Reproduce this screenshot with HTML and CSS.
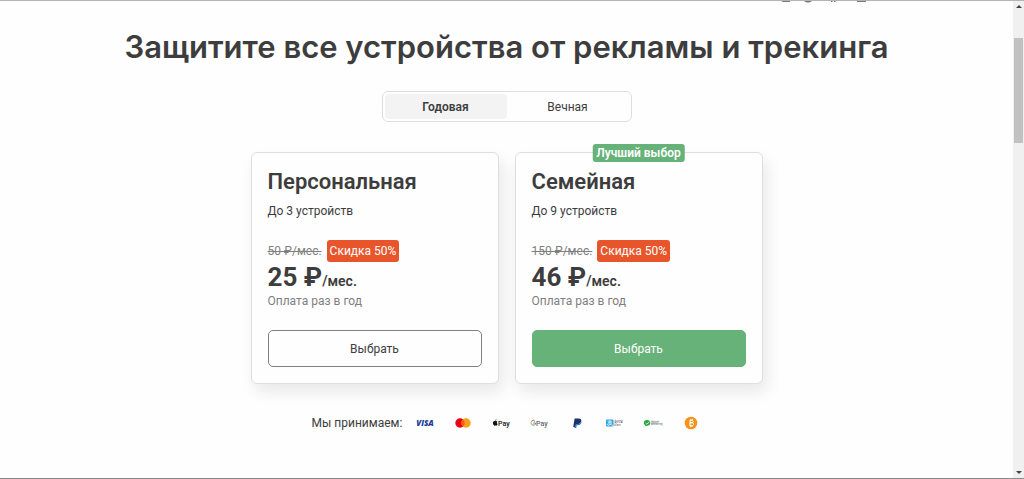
FILE: index.html
```html
<!DOCTYPE html>
<html lang="ru">
<head>
<meta charset="utf-8">
<meta name="viewport" content="width=device-width, initial-scale=1">
<title>Защитите все устройства</title>
<link rel="stylesheet" href="styles.css">
</head>
<body>
<div class="window">
  <main class="page">
    <svg class="nav-edge" width="90" height="3" viewBox="0 0 90 3" aria-hidden="true">
      <path d="M4 0h9v1H6zM27 0h8q-4 3-8 0zM54 0h2l-1 1h-1zM57 0h2l-1 1h-1zM80 0h9v1h-9z" fill="#777"/>
    </svg>
    <h1 class="title">Защитите все устройства от рекламы и трекинга</h1>
    <div class="tabs" role="tablist">
      <button class="tab tab-active" role="tab" aria-selected="true">Годовая</button>
      <button class="tab" role="tab" aria-selected="false">Вечная</button>
    </div>
    <div class="plans">
      <section class="card">
        <h2 class="plan-name">Персональная</h2>
        <p class="devices">До 3 устройств</p>
        <div class="old-row"><s class="old-price">50 ₽/мес.</s><span class="discount">Скидка 50%</span></div>
        <p class="price">25 ₽<span class="period">/мес.</span></p>
        <p class="billing">Оплата раз в год</p>
        <button class="choose">Выбрать</button>
      </section>
      <section class="card">
        <span class="best">Лучший выбор</span>
        <h2 class="plan-name">Семейная</h2>
        <p class="devices">До 9 устройств</p>
        <div class="old-row"><s class="old-price">150 ₽/мес.</s><span class="discount">Скидка 50%</span></div>
        <p class="price">46 ₽<span class="period">/мес.</span></p>
        <p class="billing">Оплата раз в год</p>
        <button class="choose choose-primary">Выбрать</button>
      </section>
    </div>
    <div class="payments">
      <span class="accept">Мы принимаем:</span>
      <div class="methods">
        <svg class="method" viewBox="0 0 20 14" role="img" aria-label="Visa"><text class="visa" x="10" y="10" text-anchor="middle">VISA</text></svg>
        <svg class="method" viewBox="0 0 20 14" role="img" aria-label="Mastercard"><circle cx="7" cy="7" r="4.7" fill="#eb001b"/><circle cx="13" cy="7" r="4.7" fill="#f79e1b"/><path d="M10 3.4a4.7 4.7 0 0 1 0 7.2a4.7 4.7 0 0 1 0-7.2z" fill="#ff5f00"/></svg>
        <svg class="method" viewBox="0 0 20 14" role="img" aria-label="Apple Pay"><path d="M4.500 5.200c.7-.5 1.500-.3 2 .3c-1 .7-.8 2 .2 2.500C6.300 9 5.700 9.700 5.200 9.700c-.5 0-.8-.2-1.200 0C3 10 1.900 8.400 1.900 7.100c0-1.700 1.400-2.500 2.600-1.900zM4.300 4.800c0-.8.500-1.400 1.200-1.500c.1.800-.5 1.500-1.200 1.500z" fill="#111"/><text class="pay apple" x="7" y="9.500">Pay</text></svg>
        <svg class="method" viewBox="0 0 20 14" role="img" aria-label="Google Pay"><path d="M6 5.300A2.300 2.300 0 0 0 2.500 5.300" fill="none" stroke="#d4544a"/><path d="M2.500 5.300a2.500 2.500 0 0 0 0 3" fill="none" stroke="#c7a640"/><path d="M2.500 8.300a2.400 2.400 0 0 0 3 .6" fill="none" stroke="#55a169"/><path d="M4.300 7h2.200c0 1-.3 1.600-1 2" fill="none" stroke="#5583c7"/><text class="pay google" x="7" y="9.500">Pay</text></svg>
        <svg class="method" viewBox="0 0 20 14" role="img" aria-label="PayPal"><path d="M7.600 2.500h4.200c2.300 0 3 1.400 2.300 3.200c-.6 1.700-1.900 2.300-4 2.300H9l-.5 2.900H6.200z" fill="#1c3270"/><path d="M14.400 5c.5 2.600-1 4.200-3.600 4.200H9.700L9.200 12H7.400l.4-1.400h.9l.5-2.500h1.100c2.100 0 3.700-.9 4.100-3.100z" fill="#2380b8"/></svg>
        <svg class="method" viewBox="0 0 20 14" role="img" aria-label="Alipay"><rect x="1" y="3.500" width="7.500" height="7" rx="1" fill="#2aa3e3"/><path d="M2.500 5.200h4.500M4.800 4.300v2.400M3 6.700h3.600C6 8.700 2.300 10.300 2.300 8.500c0-1.300 2.500-.5 5.700 1" fill="none" stroke="#fff" stroke-width=".7"/><text class="tiny" x="9" y="7">支付宝</text><text class="tiny latin" x="9" y="10">ALIPAY</text></svg>
        <svg class="method" viewBox="0 0 20 14" role="img" aria-label="WeChat Pay"><path d="M4 4.100c2 0 3.300 1.200 3.300 2.800S6 9.700 4 9.700l-1.900.5l.3-1C1.400 8.700.8 7.900.8 6.900c0-1.600 1.300-2.800 3.200-2.800z" fill="#25a63b"/><path d="M2.500 7l1.200 1l2.700-2" fill="none" stroke="#fff" stroke-width=".8"/><text class="tiny wechat" x="8" y="7">微信支付</text><text class="tiny wechat" x="8" y="9">WeChat Pay</text></svg>
        <svg class="method" viewBox="0 0 20 14" role="img" aria-label="Bitcoin"><circle cx="10" cy="7" r="6.300" fill="#f7931a"/><path d="M8.800 4.400h2c2 0 1.800 2.400 0 2.400H8.800h2.200c2.200 0 2 2.800 0 2.800H8.600M9 4.400v5.200M9.800 3v1.400M11.300 3v1.400M9.400 9.600V11M10.900 9.600V11" fill="none" stroke="#fff"/></svg>
      </div>
    </div>
  </main>
  <div class="scrollbar" aria-hidden="true">
    <span class="arrow arrow-up"></span>
    <span class="thumb"></span>
    <span class="arrow arrow-down"></span>
  </div>
</div>
</body>
</html>
```
FILE: styles.css
```css
* { box-sizing: border-box; }
body {
  margin: 0;
  background: #fefefe;
  color: #3d3d3d;
  font-family: Roboto, "Noto Sans CJK SC", sans-serif;
  font-size: 12px;
  line-height: 16px;
}
h1, h2, p { margin: 0; }
button { font: inherit; color: inherit; cursor: pointer; }
.window {
  display: flex;
  min-height: 100vh;
  border-top: 1px solid #b4b4b4;
  border-bottom: 1px solid #8a8a8a;
}
.page {
  position: relative;
  flex: 1;
  display: flex;
  flex-direction: column;
  align-items: center;
  padding-top: 26px;
}
.nav-edge { position: absolute; top: 0; right: 146px; }
.title { font-family: Inter, sans-serif; font-size: 31px; line-height: 40px; font-weight: 600; text-align: center; }
.tabs {
  display: flex;
  width: 250px;
  margin-top: 24px;
  padding: 2px;
  border: 1px solid #dedede;
  border-radius: 6px;
}
.tab { flex: 1; height: 25px; padding: 0; border: 0; border-radius: 4px; background: none; }
.tab-active { background: #f3f3f3; font-weight: 600; }
.plans { display: flex; gap: 16px; margin-top: 30px; }
.card {
  position: relative;
  width: 248px;
  padding: 16px;
  border: 1px solid #dedede;
  border-radius: 6px;
  background: #fefefe;
  box-shadow: 4px 8px 16px rgba(0, 0, 0, 0.09);
}
.best {
  position: absolute;
  top: -9px;
  left: 50%;
  transform: translateX(-50%);
  padding: 1px 4px;
  border-radius: 3px;
  background: #67b279;
  color: #fff;
  font-weight: 600;
  white-space: nowrap;
}
.plan-name { font-family: Roboto, sans-serif; font-size: 22px; line-height: 26px; font-weight: 600; }
.devices { margin-top: 8px; }
.old-row { display: flex; align-items: center; gap: 5px; margin-top: 21px; }
.old-price { color: #7f7f7f; }
.discount { padding: 3px; border-radius: 3px; background: #e9552a; color: #fff; }
.price { font-size: 26px; line-height: 31px; font-weight: 700; }
.period { font-size: 14px; line-height: 16px; font-weight: 600; }
.billing { color: #7f7f7f; }
.choose {
  display: block;
  width: 100%;
  height: 37px;
  margin-top: 21px;
  padding: 0;
  border: 1px solid #7f7f7f;
  border-radius: 5px;
  background: none;
}
.choose-primary { border-color: #67b279; background: #67b279; color: #fff; }
.payments { display: flex; align-items: center; gap: 13px; margin-top: 31px; }
.methods { display: flex; gap: 18px; }
.method { width: 20px; height: 14px; overflow: visible; }
.visa { font: italic 800 8px "Open Sans", sans-serif; fill: #203d96; }
.pay { font: 500 7px Roboto, sans-serif; }
.apple { fill: #111; }
.google { fill: #666; }
.tiny { font: 700 3px "Noto Sans CJK SC", sans-serif; fill: #666; }
.latin { font-size: 2px; }
.wechat { font-size: 2px; fill: #777; }
.scrollbar {
  display: flex;
  flex-direction: column;
  align-items: center;
  width: 11px;
  padding: 4px 0;
  background: #f0f0f0;
}
.arrow { border: 3px solid transparent; }
.arrow-up { border-top: 0; border-bottom-color: #444; }
.arrow-down { margin-top: auto; border-bottom: 0; border-top-color: #444; }
.thumb { width: 9px; height: 22vh; margin-top: 30px; background: #c1c1c1; }
```
